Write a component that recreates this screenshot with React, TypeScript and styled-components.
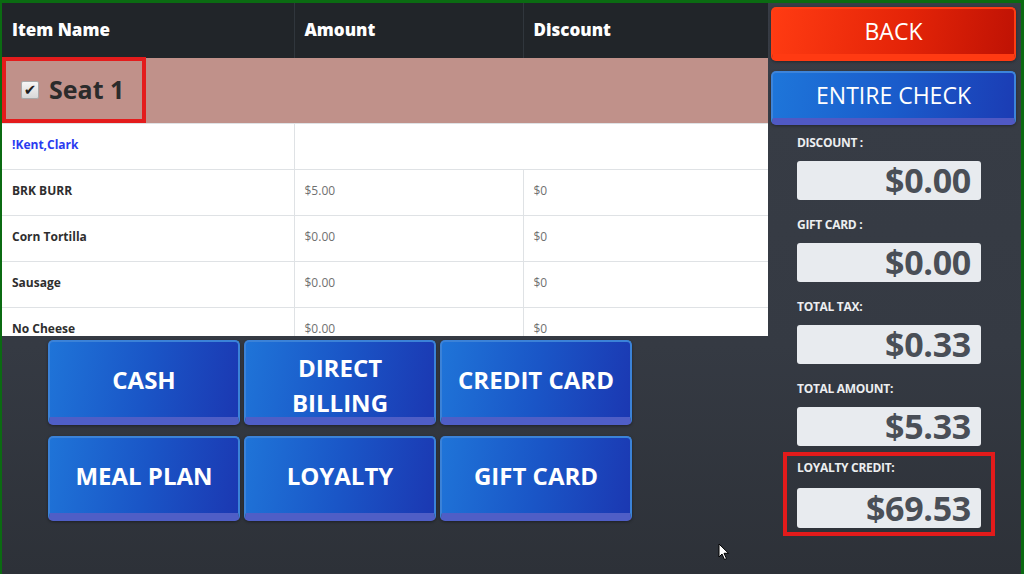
import React from 'react';
import styled, { createGlobalStyle } from 'styled-components';

const GlobalStyle = createGlobalStyle`
  html, body {
    margin: 0;
    padding: 0;
    background: #30353d;
  }
  * {
    box-sizing: border-box;
  }
`;

type Item = { name: string; amount: string; discount: string };

const items: Item[] = [
  { name: 'BRK BURR', amount: '$5.00', discount: '$0' },
  { name: 'Corn Tortilla', amount: '$0.00', discount: '$0' },
  { name: 'Sausage', amount: '$0.00', discount: '$0' },
  { name: 'No Cheese', amount: '$0.00', discount: '$0' },
];

const payments = ['CASH', 'DIRECT BILLING', 'CREDIT CARD', 'MEAL PLAN', 'LOYALTY', 'GIFT CARD'];

const totals = [
  { label: 'DISCOUNT :', value: '$0.00' },
  { label: 'GIFT CARD :', value: '$0.00' },
  { label: 'TOTAL TAX:', value: '$0.33' },
  { label: 'TOTAL AMOUNT:', value: '$5.33' },
];

export default function App() {
  return (
    <>
      <GlobalStyle />
      <Frame>
        <LeftColumn>
          <TableWrap>
            <OrderTable>
              <colgroup>
                <col style={{ width: 292 }} />
                <col style={{ width: 229 }} />
                <col />
              </colgroup>
              <thead>
                <tr>
                  <HeadCell>Item Name</HeadCell>
                  <HeadCell>Amount</HeadCell>
                  <HeadCell>Discount</HeadCell>
                </tr>
              </thead>
              <tbody>
                <SeatRow>
                  <td colSpan={3}>
                    <SeatBox>
                      <CheckBox>✔</CheckBox>
                      <SeatLabel>Seat 1</SeatLabel>
                    </SeatBox>
                  </td>
                </SeatRow>
                <ItemRow>
                  <NameCell $guest>!Kent,Clark</NameCell>
                  <PriceCell colSpan={2} />
                </ItemRow>
                {items.map((item) => (
                  <ItemRow key={item.name}>
                    <NameCell>{item.name}</NameCell>
                    <PriceCell>{item.amount}</PriceCell>
                    <PriceCell>{item.discount}</PriceCell>
                  </ItemRow>
                ))}
              </tbody>
            </OrderTable>
          </TableWrap>

          <PayGrid>
            {payments.map((p) => {
              const words = p === 'DIRECT BILLING' ? ['DIRECT', 'BILLING'] : [p];
              return (
                <PayButton key={p} $multi={words.length > 1}>
                  {words.map((w, i) => (
                    <React.Fragment key={w}>
                      {i > 0 && <br />}
                      {w}
                    </React.Fragment>
                  ))}
                </PayButton>
              );
            })}
          </PayGrid>
        </LeftColumn>

        <SidePanel>
          <ActionButton $variant="back">BACK</ActionButton>
          <ActionButton $variant="check">ENTIRE CHECK</ActionButton>
          <Totals>
            {totals.map((t, i) => (
              <Field key={t.label} $tight={i === totals.length - 1}>
                <FieldLabel>{t.label}</FieldLabel>
                <ValueBox>{t.value}</ValueBox>
              </Field>
            ))}
            <LoyaltyBox>
              <FieldLabel>LOYALTY CREDIT:</FieldLabel>
              <ValueBox>$69.53</ValueBox>
            </LoyaltyBox>
          </Totals>
        </SidePanel>

        <Pointer width="12" height="18" viewBox="0 0 12 18">
          <path d="M1 1 L1 14 L4 11 L6.5 16.5 L8.5 15.6 L6 10.3 L10.5 10.3 Z" fill="#fff" stroke="#000" strokeWidth="1" />
        </Pointer>
      </Frame>
    </>
  );
}

const Frame = styled.div`
  position: relative;
  width: 1024px;
  height: 574px;
  display: flex;
  border-top: 3px solid #0b6b12;
  border-left: 2px solid #0b6b12;
  border-right: 3px solid #0b6b12;
  background: linear-gradient(180deg, #383d46 0%, #353a43 60%, #2d3138 100%);
  font-family: 'Open Sans', 'Noto Sans', 'Liberation Sans', sans-serif;
  overflow: hidden;
`;

const LeftColumn = styled.div`
  width: 766px;
  display: flex;
  flex-direction: column;
`;

const TableWrap = styled.div`
  height: 333px;
  overflow: hidden;
  background: #fff;
`;

const OrderTable = styled.table`
  width: 766px;
  border-collapse: collapse;
  table-layout: fixed;
`;

const HeadCell = styled.th`
  height: 55px;
  padding: 0 0 2px 10px;
  background: #212529;
  color: #fff;
  font-size: 17px;
  font-weight: 800;
  text-align: left;
  border-right: 1px solid #30363c;
  &:last-child {
    border-right: none;
  }
`;

const SeatRow = styled.tr`
  background: #c0918a;
  td {
    height: 65px;
    padding: 0;
    vertical-align: top;
  }
`;

const SeatBox = styled.div`
  width: 144px;
  height: 66px;
  margin-top: -1px;
  border: 4px solid #e41c1c;
  display: flex;
  align-items: center;
  padding-left: 15px;
  gap: 10px;
`;

const CheckBox = styled.span`
  width: 18px;
  height: 18px;
  border: 1px solid #a9a9a9;
  border-radius: 2px;
  background: linear-gradient(#f6f6f6, #d8d8d8);
  color: #1e1e1e;
  font-size: 15px;
  line-height: 16px;
  text-align: center;
  font-family: 'DejaVu Sans', sans-serif;
`;

const SeatLabel = styled.span`
  font-size: 25px;
  font-weight: 700;
  color: #2b2b2b;
  margin-top: -2px;
`;

const ItemRow = styled.tr`
  td {
    height: 46px;
    border-top: 1px solid #dfe2e5;
    border-right: 1px solid #dfe2e5;
    padding: 0 0 5px 10px;
    vertical-align: middle;
    font-size: 12px;
  }
  td:last-child {
    border-right: none;
  }
`;

const NameCell = styled.td<{ $guest?: boolean }>`
  font-weight: 700;
  color: ${(p) => (p.$guest ? '#2a3bf0' : '#2e2e2e')};
`;

const PriceCell = styled.td`
  color: #707070;
  font-weight: 400;
`;

const PayGrid = styled.div`
  display: grid;
  grid-template-columns: repeat(3, 192px);
  column-gap: 4px;
  row-gap: 11px;
  padding: 4px 0 0 46px;
`;

const PayButton = styled.button<{ $multi?: boolean }>`
  height: 85px;
  border: 2px solid #3b82d8;
  border-bottom: 8px solid #4f5ec6;
  border-radius: 5px;
  background: linear-gradient(100deg, #1f74d8 0%, #1a56c7 50%, #1b38b2 100%);
  color: #fff;
  font-family: inherit;
  font-size: 24px;
  font-weight: 700;
  line-height: 35px;
  padding: ${(p) => (p.$multi ? '8px 0 0' : '0 0 0')};
  box-shadow: 0 1px 3px rgba(0, 0, 0, 0.4);
  cursor: pointer;
`;

const SidePanel = styled.div`
  flex: 1;
  display: flex;
  flex-direction: column;
  padding: 4px 5px 0 3px;
  gap: 10px;
`;

const ActionButton = styled.button<{ $variant: 'back' | 'check' }>`
  height: 54px;
  border-radius: 5px;
  border: 2px solid ${(p) => (p.$variant === 'back' ? '#ff3d12' : '#3d84da')};
  border-bottom: 7px solid ${(p) => (p.$variant === 'back' ? '#ff3a12' : '#5059c4')};
  background: ${(p) =>
    p.$variant === 'back'
      ? 'linear-gradient(100deg, #ff3b12 0%, #e42408 55%, #bf1204 100%)'
      : 'linear-gradient(100deg, #1e76da 0%, #1a5ccb 50%, #1b3cb4 100%)'};
  color: #fff;
  font-family: inherit;
  font-size: 23px;
  font-weight: 400;
  padding: 0 0 1px;
  box-shadow: 0 1px 3px rgba(0, 0, 0, 0.35);
  cursor: pointer;
`;

const Totals = styled.div`
  display: flex;
  flex-direction: column;
`;

const Field = styled.div<{ $tight?: boolean }>`
  display: flex;
  flex-direction: column;
  padding-left: 26px;
  margin-bottom: ${(p) => (p.$tight ? '6px' : '17px')};
`;

const FieldLabel = styled.div`
  height: 15px;
  line-height: 15px;
  margin-bottom: 11px;
  color: #eceef0;
  font-size: 12px;
  font-weight: 700;
  letter-spacing: -0.3px;
`;

const ValueBox = styled.div`
  width: 184px;
  height: 39px;
  border-radius: 3px;
  background: #e8ebef;
  color: #4a4f57;
  font-size: 34px;
  font-weight: 700;
  line-height: 39px;
  text-align: right;
  padding-right: 10px;
  letter-spacing: -0.3px;
`;

const LoyaltyBox = styled.div`
  width: 212px;
  margin-left: 12px;
  border: 4px solid #e31b1b;
  padding: 4px 10px;
  display: flex;
  flex-direction: column;

  ${FieldLabel} {
    margin-bottom: 13px;
  }

  ${ValueBox} {
    height: 40px;
    line-height: 40px;
  }
`;

const Pointer = styled.svg`
  position: absolute;
  left: 716px;
  top: 540px;
`;
